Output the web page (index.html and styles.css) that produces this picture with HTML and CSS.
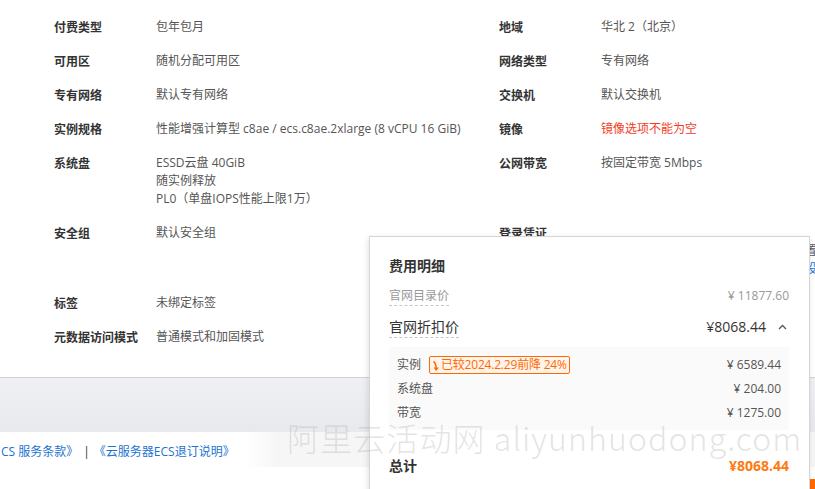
FILE: index.html
```html
<!DOCTYPE html>
<html lang="zh-CN">
<head>
<meta charset="utf-8">
<title>确认订单</title>
<link rel="stylesheet" href="styles.css">
</head>
<body>
<div class="page">
  <section class="specs">
    <div class="lbl">付费类型</div><div class="val">包年包月</div>
    <div class="lbl">地域</div><div class="val">华北 2（北京）</div>

    <div class="lbl">可用区</div><div class="val">随机分配可用区</div>
    <div class="lbl">网络类型</div><div class="val">专有网络</div>

    <div class="lbl">专有网络</div><div class="val">默认专有网络</div>
    <div class="lbl">交换机</div><div class="val">默认交换机</div>

    <div class="lbl">实例规格</div><div class="val nowrap">性能增强计算型 c8ae / ecs.c8ae.2xlarge (8 vCPU 16 GiB)</div>
    <div class="lbl">镜像</div><div class="val error">镜像选项不能为空</div>

    <div class="lbl">系统盘</div>
    <div class="val">ESSD云盘 40GiB<br>随实例释放<br>PL0（单盘IOPS性能上限1万）</div>
    <div class="lbl">公网带宽</div><div class="val">按固定带宽 5Mbps</div>

    <div class="lbl">安全组</div><div class="val">默认安全组</div>
    <div class="lbl">登录凭证</div>
    <div class="val nowrap">&nbsp;<br>创建完成后请前往控制台实例详情页重置<br>如需自定义登录密码，您也可以现在就<a class="link" href="#">设置登录凭证</a></div>

    <div class="lbl">标签</div><div class="val">未绑定标签</div>
    <div class="lbl"></div><div class="val"></div>

    <div class="lbl">元数据访问模式</div><div class="val">普通模式和加固模式</div>
    <div class="lbl"></div><div class="val"></div>
  </section>

  <footer class="footer">
    <div class="band"></div>
    <div class="links">
      <a class="link" href="#">CS 服务条款》</a>
      <span class="sep">|</span>
      <a class="link" href="#">《云服务器ECS退订说明》</a>
    </div>
    <div class="actions"><span class="btn-order">确认下单</span></div>
  </footer>
</div>

<div class="cost-popup">
  <div class="cost-title">费用明细</div>
  <div class="cost-row muted">
    <span class="dashed">官网目录价</span>
    <span>¥ 11877.60</span>
  </div>
  <div class="cost-row strong">
    <span class="dashed">官网折扣价</span>
    <span class="price-wrap">¥8068.44
      <svg class="chev" width="9" height="6" viewBox="0 0 9 6"><polyline points="1,5 4.5,1.5 8,5" fill="none" stroke="#555" stroke-width="1.3"/></svg>
    </span>
  </div>
  <div class="cost-detail">
    <div class="detail-row">
      <span class="detail-name">实例
        <span class="tag"><svg width="8" height="12" viewBox="0 0 8 12"><path d="M1.5 1.5 C4 3 4.2 6 4.2 10" fill="none" stroke="#ff6a00" stroke-width="1.5"/><path d="M1.6 7.6 L4.2 11 L6.8 7.6 Z" fill="#ff6a00"/></svg>已较2024.2.29前降 24%</span>
      </span>
      <span>¥ 6589.44</span>
    </div>
    <div class="detail-row"><span>系统盘</span><span>¥ 204.00</span></div>
    <div class="detail-row"><span>带宽</span><span>¥ 1275.00</span></div>
  </div>
  <div class="cost-total">
    <span>总计</span>
    <span class="total-price">¥8068.44</span>
  </div>
</div>

<div class="watermark">阿里云活动网 aliyunhuodong.com</div>
</body>
</html>
```

FILE: styles.css
```css
* { box-sizing: border-box; }
html, body {
  margin: 0;
  padding: 0;
  background: #fff;
  overflow: hidden;
}
body {
  width: 815px;
  height: 489px;
  position: relative;
  font-family: "Open Sans", "Noto Sans CJK SC", sans-serif;
  font-size: 12px;
  color: #555;
}
a { text-decoration: none; }
.link { color: #1a73d1; }

.specs {
  display: grid;
  grid-template-columns: 102px 343px 102px 1fr;
  row-gap: 16px;
  padding: 18px 0 31px 54px;
  line-height: 18px;
}
.lbl {
  color: #333;
  font-weight: bold;
  font-family: "Noto Sans CJK SC", sans-serif;
}
.val { color: #555; }
.nowrap { white-space: nowrap; }
.error { color: #f23d1e; }

.footer {
  border-top: 1px solid #d2d2d2;
}
.band {
  height: 54px;
  background: linear-gradient(#eef0f3, #e8e9ed);
}
.links {
  height: 35px;
  display: flex;
  align-items: center;
  padding: 3px 0 0 1px;
  background: linear-gradient(to right, #ffffff 30%, #f6f6f7 34%, #f6f6f7);
  white-space: nowrap;
}
.sep {
  color: #333;
  margin: 0 4px 0 5px;
}
.actions {
  display: flex;
  justify-content: flex-end;
  height: 22px;
  overflow: hidden;
}
.btn-order {
  margin-top: 12px;
  width: 110px;
  height: 32px;
  background: #ff6a00;
  color: #fff;
  text-align: center;
  line-height: 32px;
}

.cost-popup {
  position: absolute;
  left: 369px;
  top: 236px;
  width: 441px;
  height: 280px;
  background: #fff;
  border: 1px solid #d6d6d6;
  box-shadow: -1px 2px 6px rgba(0, 0, 0, 0.12);
  padding: 19px 20px 0 19px;
  z-index: 5;
}
.cost-title {
  font-size: 14px;
  font-weight: bold;
  color: #333;
  line-height: 18px;
  font-family: "Noto Sans CJK SC", sans-serif;
}
.cost-row {
  display: flex;
  justify-content: space-between;
  align-items: flex-start;
}
.cost-row.muted {
  margin-top: 13px;
  color: #999;
  font-size: 12px;
  line-height: 18px;
}
.cost-row.strong {
  margin-top: 11px;
  color: #333;
  font-size: 14px;
  line-height: 20px;
}
.dashed {
  border-bottom: 1px dashed #c8c8c8;
}
.price-wrap {
  display: flex;
  align-items: center;
}
.chev { margin: 0 2px 0 12px; }

.cost-detail {
  margin-top: 9px;
  background: #fafafa;
  padding: 6px 8px 5px;
}
.detail-row {
  display: flex;
  justify-content: space-between;
  line-height: 24px;
  color: #555;
}
.detail-name {
  display: flex;
  align-items: center;
}
.tag {
  display: inline-flex;
  align-items: center;
  margin-left: 8px;
  height: 18px;
  padding: 0 2px 0 2px;
  border: 1px solid #ff6a00;
  border-radius: 2px;
  background: #fff4ec;
  color: #ff6a00;
  line-height: 16px;
  letter-spacing: -0.2px;
}
.tag svg { margin-right: 1px; margin-top: 2px; }

.cost-total {
  margin-top: 26px;
  display: flex;
  justify-content: space-between;
  font-size: 14px;
  line-height: 20px;
  font-weight: bold;
  color: #333;
}
.total-price { color: #ff7a0f; }

.watermark {
  position: absolute;
  left: 287px;
  top: 417px;
  font-size: 32px;
  letter-spacing: 1.1px;
  line-height: 40px;
  font-weight: 300;
  color: rgba(170, 170, 170, 0.32);
  white-space: nowrap;
  z-index: 10;
  pointer-events: none;
  font-family: "Noto Sans CJK SC", sans-serif;
}
```
